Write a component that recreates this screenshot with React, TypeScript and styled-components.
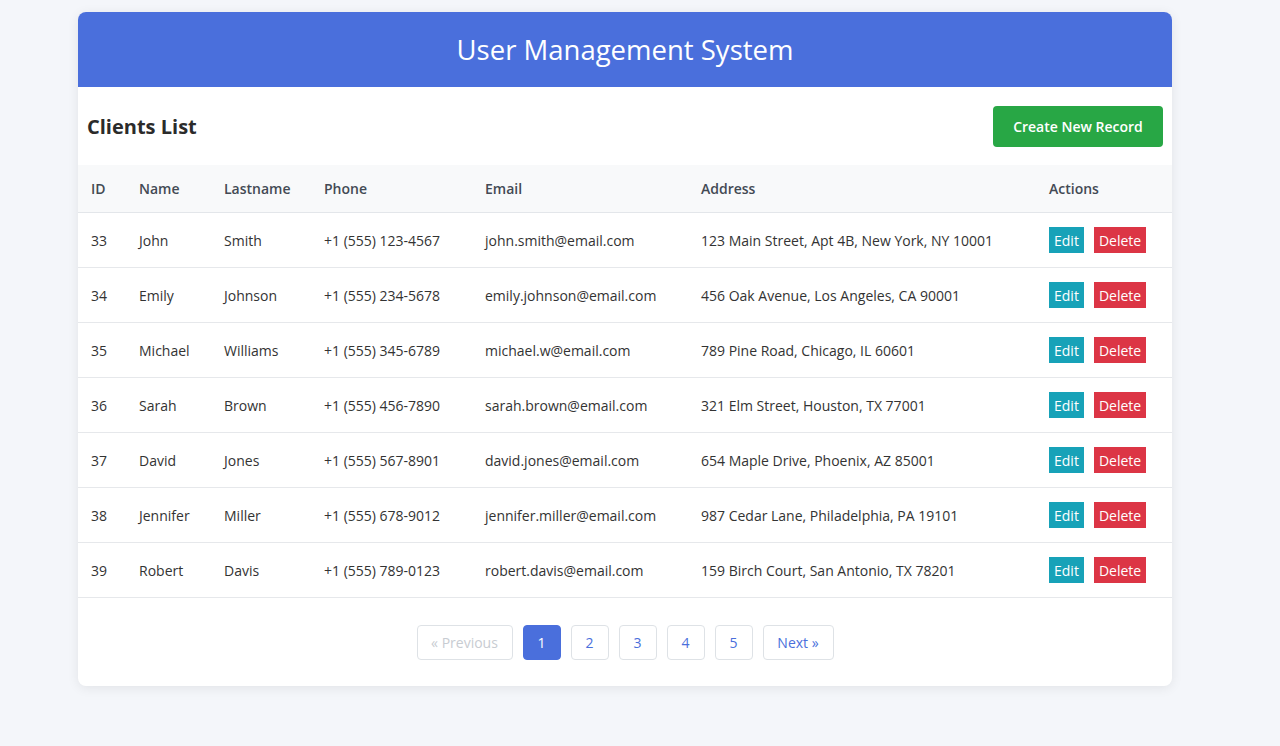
import React from "react";
import styled, { createGlobalStyle } from "styled-components";

const GlobalStyle = createGlobalStyle`
  html, body { margin: 0; padding: 0; }
  body {
    background: #f4f6fa;
    font-family: "Open Sans", "Noto Sans", "Liberation Sans", sans-serif;
    color: #333;
  }
`;

const Page = styled.div`
  padding: 12px 0 59px 78px;
`;

const Card = styled.div`
  width: 1094px;
  background: #fff;
  border-radius: 8px;
  box-shadow: 0 2px 12px rgba(0, 0, 0, 0.08);
  overflow: hidden;
`;

const Header = styled.header`
  height: 75px;
  background: #4a6fdc;
  display: flex;
  align-items: center;
  justify-content: center;
`;

const Title = styled.h1`
  margin: 0;
  color: #fff;
  font-size: 27.5px;
  font-weight: 400;
  letter-spacing: 0;
`;

const Toolbar = styled.div`
  height: 78px;
  box-sizing: border-box;
  padding: 0 9px;
  display: flex;
  align-items: center;
  justify-content: space-between;
`;

const SubTitle = styled.h2`
  margin: 0;
  font-size: 20px;
  font-weight: 700;
  color: #2b2b2b;
`;

const PrimaryButton = styled.button`
  height: 41px;
  width: 170px;
  border: none;
  border-radius: 4px;
  background: #28a745;
  color: #fff;
  font-family: inherit;
  font-size: 14px;
  font-weight: 600;
  cursor: pointer;
  margin-top: 1px;
`;

const Table = styled.table`
  width: 100%;
  border-collapse: collapse;
  table-layout: fixed;
  font-size: 14px;
`;

const Th = styled.th`
  background: #f8f9fa;
  height: 47px;
  text-align: left;
  padding: 0 0 0 13px;
  font-weight: 600;
  color: #434a54;
  border-bottom: 1px solid #e3e6ea;
`;

const Td = styled.td`
  height: 54px;
  padding: 0 0 0 13px;
  color: #333;
  border-bottom: 1px solid #e6e8eb;
  white-space: nowrap;
`;

const Actions = styled.div`
  display: flex;
  gap: 10px;
`;

const SmallButton = styled.button<{ $variant: "edit" | "delete" }>`
  height: 26px;
  padding: 0 5px;
  border: none;
  border-radius: 0;
  background: ${(p) => (p.$variant === "edit" ? "#17a2b8" : "#dc3545")};
  color: #fff;
  font-family: inherit;
  font-size: 14px;
  cursor: pointer;
`;

const Pagination = styled.nav`
  display: flex;
  justify-content: center;
  gap: 10px;
  padding: 27px 0 26px;
`;

const PageButton = styled.button<{ $active?: boolean; $disabled?: boolean; $wide?: number }>`
  height: 35px;
  min-width: ${(p) => (p.$wide ? `${p.$wide}px` : "38px")};
  box-sizing: border-box;
  border: 1px solid ${(p) => (p.$active ? "#4a6fdc" : "#dee2e6")};
  border-radius: 4px;
  background: ${(p) => (p.$active ? "#4a6fdc" : "#fff")};
  color: ${(p) => (p.$active ? "#fff" : p.$disabled ? "#c8ccd2" : "#4a6fdc")};
  font-family: inherit;
  font-size: 14px;
  padding: 0 12px;
  cursor: ${(p) => (p.$disabled ? "default" : "pointer")};
`;

const rows = [
  ["33", "John", "Smith", "+1 (555) 123-4567", "john.smith@email.com", "123 Main Street, Apt 4B, New York, NY 10001"],
  ["34", "Emily", "Johnson", "+1 (555) 234-5678", "emily.johnson@email.com", "456 Oak Avenue, Los Angeles, CA 90001"],
  ["35", "Michael", "Williams", "+1 (555) 345-6789", "michael.w@email.com", "789 Pine Road, Chicago, IL 60601"],
  ["36", "Sarah", "Brown", "+1 (555) 456-7890", "sarah.brown@email.com", "321 Elm Street, Houston, TX 77001"],
  ["37", "David", "Jones", "+1 (555) 567-8901", "david.jones@email.com", "654 Maple Drive, Phoenix, AZ 85001"],
  ["38", "Jennifer", "Miller", "+1 (555) 678-9012", "jennifer.miller@email.com", "987 Cedar Lane, Philadelphia, PA 19101"],
  ["39", "Robert", "Davis", "+1 (555) 789-0123", "robert.davis@email.com", "159 Birch Court, San Antonio, TX 78201"],
];

const colWidths = [48, 85, 100, 161, 216, 348, 136];
const headers = ["ID", "Name", "Lastname", "Phone", "Email", "Address", "Actions"];

export default function App() {
  return (
    <>
      <GlobalStyle />
      <Page>
        <Card>
          <Header>
            <Title>User Management System</Title>
          </Header>
          <Toolbar>
            <SubTitle>Clients List</SubTitle>
            <PrimaryButton>Create New Record</PrimaryButton>
          </Toolbar>
          <Table>
            <colgroup>
              {colWidths.map((w, i) => (
                <col key={i} style={{ width: w }} />
              ))}
            </colgroup>
            <thead>
              <tr>
                {headers.map((h) => (
                  <Th key={h}>{h}</Th>
                ))}
              </tr>
            </thead>
            <tbody>
              {rows.map((r) => (
                <tr key={r[0]}>
                  {r.map((c, i) => (
                    <Td key={i}>{c}</Td>
                  ))}
                  <Td>
                    <Actions>
                      <SmallButton $variant="edit">Edit</SmallButton>
                      <SmallButton $variant="delete">Delete</SmallButton>
                    </Actions>
                  </Td>
                </tr>
              ))}
            </tbody>
          </Table>
          <Pagination>
            <PageButton $disabled $wide={96}>« Previous</PageButton>
            <PageButton $active>1</PageButton>
            <PageButton>2</PageButton>
            <PageButton>3</PageButton>
            <PageButton>4</PageButton>
            <PageButton>5</PageButton>
            <PageButton $wide={71}>Next »</PageButton>
          </Pagination>
        </Card>
      </Page>
    </>
  );
}
